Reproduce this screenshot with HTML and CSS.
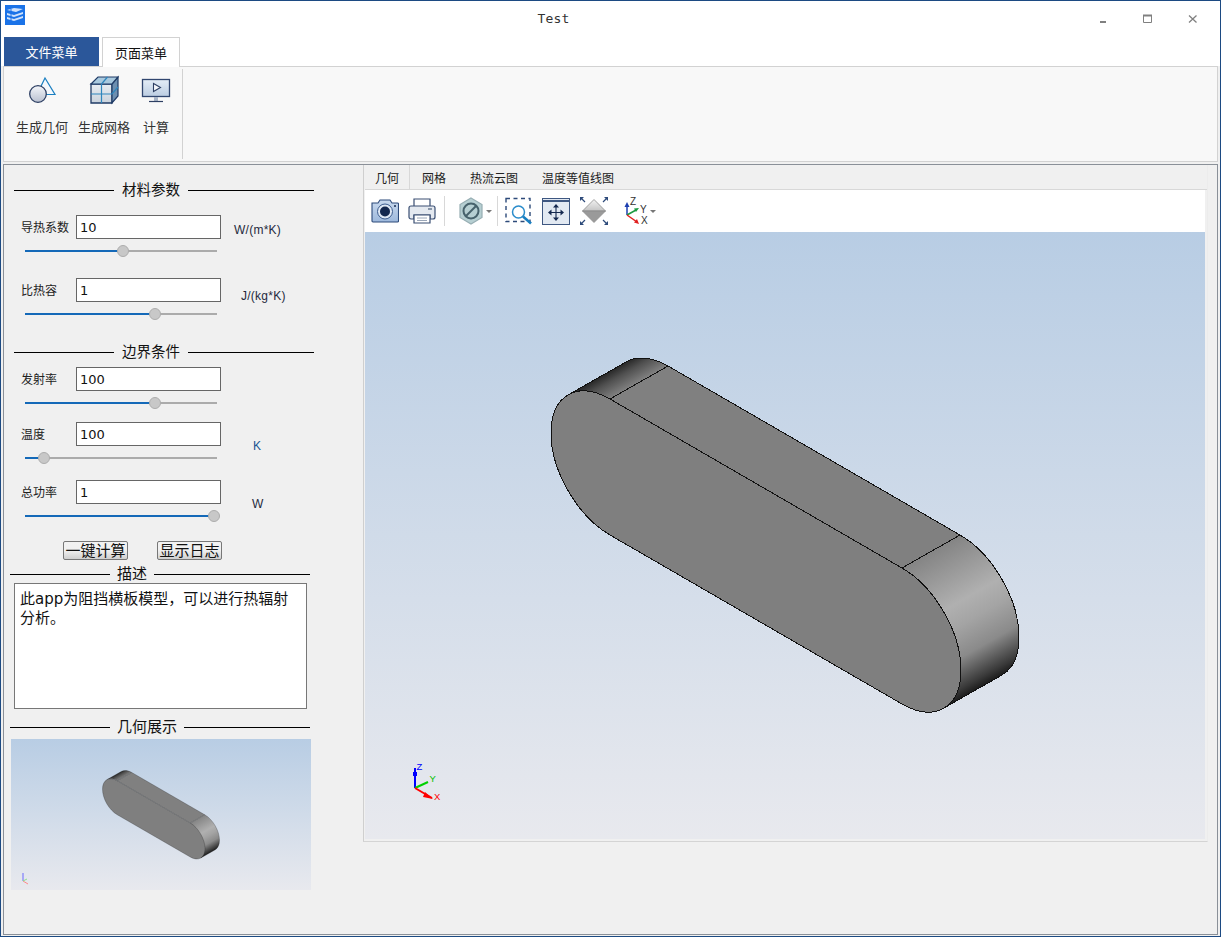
FILE: index.html
```html
<!DOCTYPE html>
<html lang="zh">
<head>
<meta charset="utf-8">
<title>Test</title>
<link rel="stylesheet" href="styles.css">
</head>
<body>
<div class="window">
  <header class="titlebar">
    <svg class="app-icon" width="20" height="20" viewBox="0 0 20 20">
      <rect width="20" height="20" fill="#1a73e8"/>
      <path d="M2 5 9 3l9 1-7 3zM2 8l7 2 9-3v2l-9 3-7-2zM2 12l7 2 9-3v2l-9 3-7-2z" fill="#cfe2fb"/>
      <path d="M6 4v12" stroke="#1a73e8" stroke-width="1"/>
    </svg>
    <div class="title">Test</div>
    <div class="controls">
      <div class="ctl"><svg width="10" height="10" viewBox="0 0 10 10"><path d="M2 8h6" stroke="#808080" stroke-width="2"/></svg></div>
      <div class="ctl"><svg width="10" height="10" viewBox="0 0 10 10"><path d="M.5 1.500h8v7h-8z" fill="none" stroke="#808080"/><path d="M0 1.500h9" stroke="#808080" stroke-width="2"/></svg></div>
      <div class="ctl"><svg width="10" height="10" viewBox="0 0 10 10"><path d="M1 1.500 8.500 8.500M8.500 1.500 1 8.500" stroke="#808080" stroke-width="1.300"/></svg></div>
    </div>
  </header>

  <nav class="menu-tabs">
    <div class="menu-tab file">文件菜单</div>
    <div class="menu-tab page">页面菜单</div>
  </nav>

  <section class="ribbon">
    <div class="ribbon-group">
      <div class="ribbon-btn b1">
        <svg width="30" height="30" viewBox="0 0 30 30">
          <defs><linearGradient id="ballg" x1="0" y1="0" x2="0" y2="1"><stop offset="0" stop-color="#f4f6fa"/><stop offset="1" stop-color="#b9c0d0"/></linearGradient></defs>
          <path d="M18 3 28 19.500H10z" fill="#f4f8fc" stroke="#1a7fc1" stroke-width="1.200"/>
          <circle cx="11" cy="19" r="8.300" fill="url(#ballg)" stroke="#2d3f63" stroke-width="1.300"/>
        </svg>
        <span>生成几何</span>
      </div>
      <div class="ribbon-btn b2">
        <svg width="30" height="30" viewBox="0 0 30 30">
          <defs><linearGradient id="cubeg" x1="0" y1="0" x2="0" y2="1"><stop offset="0" stop-color="#e8edf2"/><stop offset="1" stop-color="#c9d2dc"/></linearGradient></defs>
          <path d="M2 9h21v19H2z" fill="url(#cubeg)" stroke="#1f3b66" stroke-width="1.300"/>
          <path d="M23 9l6-7v19l-6 7z" fill="#6d8fb0" stroke="#1f3b66" stroke-width="1.200"/>
          <path d="M2 9l7-7h20l-6 7z" fill="#a9c9de" stroke="#1f3b66" stroke-width="1.200"/>
          <path d="M2 19h21l6-7M12.500 9v19M12.500 9l6-7" fill="none" stroke="#2f86bd" stroke-width="1.200"/>
        </svg>
        <span>生成网格</span>
      </div>
      <div class="ribbon-btn b3">
        <svg width="30" height="30" viewBox="0 0 30 30">
          <defs><linearGradient id="scrg" x1="0" y1="0" x2="0" y2="1"><stop offset="0" stop-color="#e4edf7"/><stop offset="1" stop-color="#bccde2"/></linearGradient></defs>
          <rect x="1.500" y="4.500" width="27" height="17" fill="url(#scrg)" stroke="#31466f" stroke-width="1.300"/>
          <path d="M12.500 8.500v8l7-4z" fill="#f5f7fb" stroke="#2d3f63" stroke-width="1.100"/>
          <path d="M13 22h4v4h-4z" fill="#aab6c8"/>
          <path d="M8 26.500h14" stroke="#2d3f63" stroke-width="1.200"/>
        </svg>
        <span>计算</span>
      </div>
    </div>
    <div class="ribbon-rule"></div>
  </section>

  <main class="workspace">
    <aside class="side">
      <div class="legend"><i></i><b>材料参数</b><i></i></div>

      <div class="field f1">
        <label>导热系数</label>
        <div class="input">10</div>
        <span class="unit u-w">W/(m*K)</span>
        <div class="slider"><div class="fill" style="width:98px"></div><div class="knob" style="left:92px"></div></div>
      </div>
      <div class="field f2">
        <label>比热容</label>
        <div class="input">1</div>
        <span class="unit u-j">J/(kg*K)</span>
        <div class="slider"><div class="fill" style="width:131px"></div><div class="knob" style="left:124px"></div></div>
      </div>

      <div class="legend second"><i></i><b>边界条件</b><i></i></div>

      <div class="field f3">
        <label>发射率</label>
        <div class="input">100</div>
        <div class="slider"><div class="fill" style="width:131px"></div><div class="knob" style="left:124px"></div></div>
      </div>
      <div class="field f4">
        <label>温度</label>
        <div class="input">100</div>
        <span class="unit u-k">K</span>
        <div class="slider"><div class="fill" style="width:20px"></div><div class="knob" style="left:13px"></div></div>
      </div>
      <div class="field f5">
        <label>总功率</label>
        <div class="input">1</div>
        <span class="unit u-p">W</span>
        <div class="slider"><div class="fill" style="width:190px"></div><div class="knob" style="left:183px"></div></div>
      </div>

      <div class="actions">
        <button class="btn">一键计算</button>
        <button class="btn">显示日志</button>
      </div>

      <div class="legend low"><i></i><b>描述</b><i></i></div>
      <div class="desc">此app为阻挡横板模型，可以进行热辐射分析。</div>
      <div class="legend low geo"><i></i><b>几何展示</b><i></i></div>

      <div class="thumb">
        <svg class="scene" viewBox="185 232 1200 604" preserveAspectRatio="xMidYMid meet"><use href="#keyshape"/></svg>
        <svg class="thumb-triad" width="10" height="14" viewBox="0 0 10 14">
          <path d="M3 1v8" stroke="#6a6aff"/><path d="M3 9l5 3" stroke="#ff8a8a"/><path d="M3 9l4-2" stroke="#8ae08a"/>
        </svg>
      </div>
    </aside>

    <section class="panel">
      <div class="view-tabs">
        <div class="view-tab active">几何</div>
        <div class="view-tab">网格</div>
        <div class="view-tab">热流云图</div>
        <div class="view-tab">温度等值线图</div>
      </div>

      <div class="toolbar">
        <svg class="t-cam" width="28" height="28" viewBox="0 0 28 28">
          <defs><linearGradient id="camg" x1="0" y1="0" x2="0" y2="1"><stop offset="0" stop-color="#c9d9ee"/><stop offset="1" stop-color="#9db8dc"/></linearGradient></defs>
          <path d="M1 6h6l2-3h10l2 3h5.500a1 1 0 0 1 1 1v17a1 1 0 0 1-1 1H2a1 1 0 0 1-1-1z" fill="url(#camg)" stroke="#2d4a7a" stroke-width="1.100"/>
          <circle cx="14" cy="14.500" r="7.500" fill="#dfe8f4" stroke="#3c5c8e"/>
          <circle cx="14" cy="14.500" r="5" fill="#14284f"/>
          <circle cx="24" cy="9" r="1" fill="#14284f"/>
        </svg>
        <svg class="t-print" width="28" height="28" viewBox="0 0 28 28">
          <path d="M6 9V2h16v7" fill="#fff" stroke="#3a4f73" stroke-width="1.200"/>
          <path d="M1 11a2 2 0 0 1 2-2h22a2 2 0 0 1 2 2v9a2 2 0 0 1-2 2h-3v-4H6v4H3a2 2 0 0 1-2-2z" fill="#e4e9f0" stroke="#3a4f73" stroke-width="1.200"/>
          <path d="M6 18h16v8H6z" fill="#fff" stroke="#3a4f73" stroke-width="1.200"/>
          <path d="M9 21h10M9 23.500h10" stroke="#9aa6b8"/>
          <path d="M20 12h4" stroke="#6a7a92" stroke-width="1.500"/>
        </svg>
        <div class="t-sep s1"></div>
        <svg class="t-hex" width="24" height="28" viewBox="0 0 24 28">
          <path d="M12 1 23 7.500v13L12 27 1 20.500v-13z" fill="#b6cfd2" stroke="#97aeb3" stroke-width="1.200"/>
          <circle cx="12" cy="14" r="7.500" fill="none" stroke="#47626c" stroke-width="2"/>
          <path d="M7 19 17 9" stroke="#47626c" stroke-width="2"/>
        </svg>
        <div class="caret c1"></div>
        <div class="t-sep s2"></div>
        <svg class="t-zoom" width="28" height="28" viewBox="0 0 28 28">
          <rect x="1" y="1.500" width="24" height="23" fill="none" stroke="#2d4a7a" stroke-width="1.400" stroke-dasharray="4 3.500"/>
          <circle cx="13.500" cy="15" r="6" fill="#fff" stroke="#2a8ccb" stroke-width="1.500"/>
          <path d="M18 19.500l8 7" stroke="#1a7fc1" stroke-width="2.600"/>
        </svg>
        <svg class="t-fit" width="28" height="28" viewBox="0 0 28 28">
          <rect x=".5" y="1.500" width="27" height="26" fill="#e2e9f2" stroke="#3e5781"/>
          <path d="M0 4h28" stroke="#3e5781" stroke-width="2"/>
          <path d="M14 8v15M7 15.500h14" stroke="#14284f" stroke-width="1.100"/>
          <path d="M14 7l-3 3.500h6zM14 24l-3-3.500h6zM6 15.500l3.500-3v6zM22 15.500l-3.500-3v6z" fill="#14284f"/>
        </svg>
        <svg class="t-dia" width="28" height="28" viewBox="0 0 28 28">
          <defs><linearGradient id="diag" x1="0" y1="0" x2="0" y2="1"><stop offset="0" stop-color="#f2f2f2"/><stop offset="1" stop-color="#c4c4c4"/></linearGradient></defs>
          <path d="M14 2.500 25.500 14h-23z" fill="url(#diag)" stroke="#8c8c8c" stroke-width=".8"/>
          <path d="M2.500 14h23L14 25.500z" fill="#9a9a9a" stroke="#8c8c8c" stroke-width=".8"/>
          <path d="M1 1l4 4M27 1l-4 4M1 27l4-4M27 27l-4-4" stroke="#2d4a7a" stroke-width="1.200"/>
          <path d="M0 0h4L0 4zM28 0h-4l4 4zM0 28h4l-4-4zM28 28h-4l4-4z" fill="#2d4a7a"/>
        </svg>
        <svg class="t-axes" width="26" height="28" viewBox="0 0 26 28">
          <path d="M3 18V8" stroke="#1d3fb0" stroke-width="1.500"/><path d="M3 5 .5 10h5z" fill="#1d3fb0"/>
          <path d="M3 18l9-5" stroke="#1a9a40" stroke-width="1.500"/><path d="M15 11l-5 .5 2 3.500z" fill="#1a9a40"/>
          <path d="M3 18l10 7" stroke="#e02020" stroke-width="1.500"/><path d="M15 27l-2-5-3 3.500z" fill="#e02020"/>
          <text x="6" y="8" class="ax-label">Z</text>
          <text x="16" y="15.500" class="ax-label">Y</text>
          <text x="17" y="26.500" class="ax-label">X</text>
        </svg>
        <div class="caret c2"></div>
      </div>

      <div class="viewport">
        <svg class="scene" viewBox="365 232 840 607" preserveAspectRatio="none">
          <defs>
            <linearGradient id="capback" gradientUnits="userSpaceOnUse" x1="597" y1="378" x2="609" y2="399">
              <stop offset="0" stop-color="#262626"/><stop offset=".4" stop-color="#505050"/><stop offset="1" stop-color="#808080"/>
            </linearGradient>
            <linearGradient id="capfront" gradientUnits="userSpaceOnUse" x1="932" y1="552" x2="1002" y2="675">
              <stop offset="0" stop-color="#858585"/><stop offset=".4" stop-color="#b0b0b0"/><stop offset=".55" stop-color="#a4a4a4"/><stop offset=".75" stop-color="#8a8a8a"/><stop offset=".94" stop-color="#3a3a3a"/><stop offset="1" stop-color="#1c1c1c"/>
            </linearGradient>
            <g id="keyshape">
              <path d="M568 395 626 362C637 355.600 652.400 357 668 366L610 399C594.400 390 579 388.600 568 395Z" fill="url(#capback)"/>
              <path d="M610 399 668 366 960 535 902 568Z" fill="#808080"/>
              <path d="M902 568 960 535C992.600 553.800 1019 599.400 1019 637 1019 655 1013 668.600 1002 675L944 708 961 670Z" fill="url(#capfront)"/>
              <path d="M610 399 902 568C934.600 586.800 961 632.400 961 670 961 707.600 934.600 722.800 902 704L610 535C577.400 516.200 551 470.600 551 433 551 395.400 577.400 380.200 610 399Z" fill="#7f7f7f" stroke="#111"/>
              <path d="M568 395 626 362C637 355.600 652.400 357 668 366L960 535C992.600 553.800 1019 599.400 1019 637 1019 655 1013 668.600 1002 675L944 708M610 399 668 366M902 568 960 535" fill="none" stroke="#111"/>
            </g>
          </defs>
          <use href="#keyshape" class="crisp"/>
          <path d="M415 788V768" stroke="#0000ff" stroke-width="2"/>
          <path d="M413 772h4v4h-4z" fill="#0000ff"/>
          <path d="M415 788 428 782" stroke="#00d000" stroke-width="2"/>
          <path d="M415 788 432 798" stroke="#ff0000" stroke-width="2"/>
          <path d="M425 792l8 7-10-2z" fill="#ff0000"/>
          <text x="416.500" y="770" class="tri z">Z</text>
          <text x="429.500" y="782" class="tri y">Y</text>
          <text x="434" y="800" class="tri x">X</text>
        </svg>
      </div>
    </section>
  </main>
</div>
</body>
</html>
```

FILE: styles.css
```css
* { box-sizing: border-box; }
html, body { margin: 0; padding: 0; }
body {
  width: 1221px;
  height: 937px;
  overflow: hidden;
  font-family: "Noto Sans CJK SC", "Noto Sans", sans-serif;
  color: #111;
}
.window {
  width: 1221px;
  height: 937px;
  display: flex;
  flex-direction: column;
  border: 1px solid #1c4a82;
  background: #f0f0f0;
}

/* title bar */
.titlebar {
  height: 36px;
  background: #fff;
  display: flex;
  align-items: flex-start;
  flex: none;
}
.app-icon { margin: 4px 2px 0 4px; flex: none; }
.title {
  flex: 1;
  text-align: center;
  font: 13px/36px "DejaVu Sans Mono", monospace;
  letter-spacing: .2px;
  color: #333;
}
.controls { display: flex; margin-right: 5px; }
.ctl {
  width: 45px;
  height: 36px;
  display: flex;
  align-items: center;
  justify-content: center;
}

/* top tabs */
.menu-tabs {
  display: flex;
  height: 29px;
  flex: none;
  padding-left: 3px;
  background: #fff;
  position: relative;
}
.menu-tab {
  height: 29px;
  font-size: 13px;
  line-height: 29px;
  text-align: center;
}
.menu-tab.file { width: 95px; background: #2b579a; color: #fff; }
.menu-tab.page {
  width: 78px;
  margin-left: 3px;
  border: 1px solid #d2d2d2;
  border-bottom: 0;
  height: 30px;
  background: #fff;
  z-index: 1;
}

/* ribbon */
.ribbon {
  height: 96px;
  flex: none;
  margin: 0 2px;
  background: #f8f8f8;
  border: 1px solid #d2d2d2;
  display: flex;
  position: relative;
}
.ribbon-group { display: flex; padding: 8px 0 0 12px; width: 178px; flex: none; }
.ribbon-btn {
  display: flex;
  flex-direction: column;
  align-items: center;
  font-size: 13px;
  line-height: 18px;
  color: #333;
}
.ribbon-btn svg { display: block; margin-bottom: 13px; }
.ribbon-btn.b1 { width: 52px; }
.ribbon-btn.b2 { width: 52px; margin-left: 10px; }
.ribbon-btn.b3 { width: 26px; margin-left: 13px; }
.ribbon-rule { width: 1px; margin: 2px 0; background: #d2d2d2; }

/* workspace */
.workspace {
  flex: 1;
  margin: 2px 2px 1px;
  border: 1px solid #8a9098;
  background: #f0f0f0;
  display: flex;
  min-height: 0;
}
.side { width: 359px; flex: none; padding-top: 16px; }

.legend {
  display: flex;
  align-items: center;
  gap: 8px;
  width: 300px;
  height: 18px;
  margin-left: 10px;
  font-size: 14.500px;
  line-height: 16px;
}
.legend b { font-weight: 400; flex: none; color: #111; margin-bottom: 2px; }
.legend i { flex: 1; height: 1px; background: #000; }
.legend i:first-child { flex: none; width: 100px; }
.legend.second { margin-top: 22px; }
.legend.low { margin-left: 6px; width: 300px; gap: 7px; font-size: 15px; }
.legend.geo { margin-top: 9px; }

.field {
  display: grid;
  grid-template-columns: 55px 145px auto;
  grid-template-rows: 24px 14px;
  row-gap: 5px;
  margin-left: 17px;
  width: 310px;
}
.field label { font-size: 12px; line-height: 24px; color: #222; }
.input {
  border: 1px solid #666;
  background: #fff;
  font: 13px/23px "DejaVu Sans", sans-serif;
  padding-left: 3px;
  color: #111;
}
.unit {
  font: 12px/16px "Liberation Sans", sans-serif;
  letter-spacing: .25px;
  color: #1f2a3d;
  align-self: start;
}
.u-w { margin: 7px 0 0 13px; }
.u-j { margin: 10px 0 0 20px; }
.u-k { margin: 16px 0 0 32px; color: #1a5490; }
.u-p { margin: 16px 0 0 31px; }
.f1 { margin-top: 16px; }
.f2 { margin-top: 20px; }
.f3 { margin-top: 6px; }
.f4 { margin-top: 12px; }
.f5 { margin-top: 15px; }

.slider {
  grid-column: 1 / -1;
  grid-row: 2;
  width: 192px;
  height: 2px;
  margin: 6px 0 0 4px;
  background: #ababab;
  position: relative;
}
.fill { height: 2px; background: #1469b8; }
.knob {
  position: absolute;
  top: -5px;
  width: 12px;
  height: 12px;
  border-radius: 50%;
  background: #c8c8c8;
  border: 1px solid #adadad;
}

.actions {
  display: flex;
  gap: 29px;
  margin: 18px 0 0 59px;
}
.btn {
  width: 65px;
  height: 19px;
  padding: 0 0 2px;
  border: 1px solid #777;
  border-radius: 2px;
  background: linear-gradient(#f2f2f2 0, #f0f0f0 50%, #cfcfcf 100%);
  font: 15px/15px "Noto Sans CJK SC", sans-serif;
  color: #111;
  white-space: nowrap;
  overflow: visible;
  display: flex;
  align-items: center;
  justify-content: center;
}
.actions + .legend { margin-top: 5px; }

.desc {
  width: 293px;
  height: 126px;
  margin-left: 10px;
  border: 1px solid #777;
  background: #fff;
  padding: 6px 10px 0 5px;
  font: 15px/19px "DejaVu Sans", "Noto Sans CJK SC", sans-serif;
  color: #111;
}

.thumb {
  width: 300px;
  height: 151px;
  margin: 3px 0 0 7px;
  background: linear-gradient(#b8cde4, #e8e9ee);
  position: relative;
}
.scene { display: block; width: 100%; height: 100%; }
.crisp { shape-rendering: crispEdges; }
.thumb-triad { position: absolute; left: 9px; top: 133px; }

/* right panel */
.panel {
  width: 845px;
  height: 677px;
  flex: none;
  border-left: 1px solid #cfcfcf;
  border-right: 1px solid #ececec;
  border-bottom: 1px solid #d4d4d4;
  padding: 0 2px 0 1px;
  display: flex;
  flex-direction: column;
}
.view-tabs {
  height: 25px;
  flex: none;
  display: flex;
  margin-right: -2px;
  border-bottom: 1px solid #d8d8d8;
  font-size: 12px;
  line-height: 25px;
  color: #222;
}
.view-tab { padding: 0 12px; white-space: nowrap; }
.view-tab.active { padding: 0; width: 45px; text-align: center; border-right: 1px solid #d8d8d8; }

.toolbar {
  height: 42px;
  flex: none;
  background: #fff;
  display: flex;
  align-items: center;
  padding-left: 6px;
}
.toolbar svg { flex: none; }
.t-print { margin-left: 9px; }
.t-sep { width: 1px; height: 30px; background: #d8d8d8; flex: none; }
.s1 { margin: 0 14px 0 8px; }
.s2 { margin: 0 7px 0 5px; }
.caret { width: 0; height: 0; border: 3px solid transparent; border-top-color: #777; border-bottom: 0; flex: none; }
.c1 { margin-left: 3px; }
.t-fit { margin-left: 9px; }
.t-dia { margin-left: 10px; }
.t-axes { margin-left: 16px; }
.c2 { margin-left: 0; }
.ax-label { font: 10px "Liberation Sans", sans-serif; fill: #333; }

.viewport {
  height: 607px;
  flex: none;
  background: linear-gradient(#b8cde4, #e8e9ee);
}
.tri { font: 9.500px "Liberation Sans", sans-serif; }
.tri.z { fill: #0000ff; }
.tri.y { fill: #00c000; }
.tri.x { fill: #ff0000; }
```
